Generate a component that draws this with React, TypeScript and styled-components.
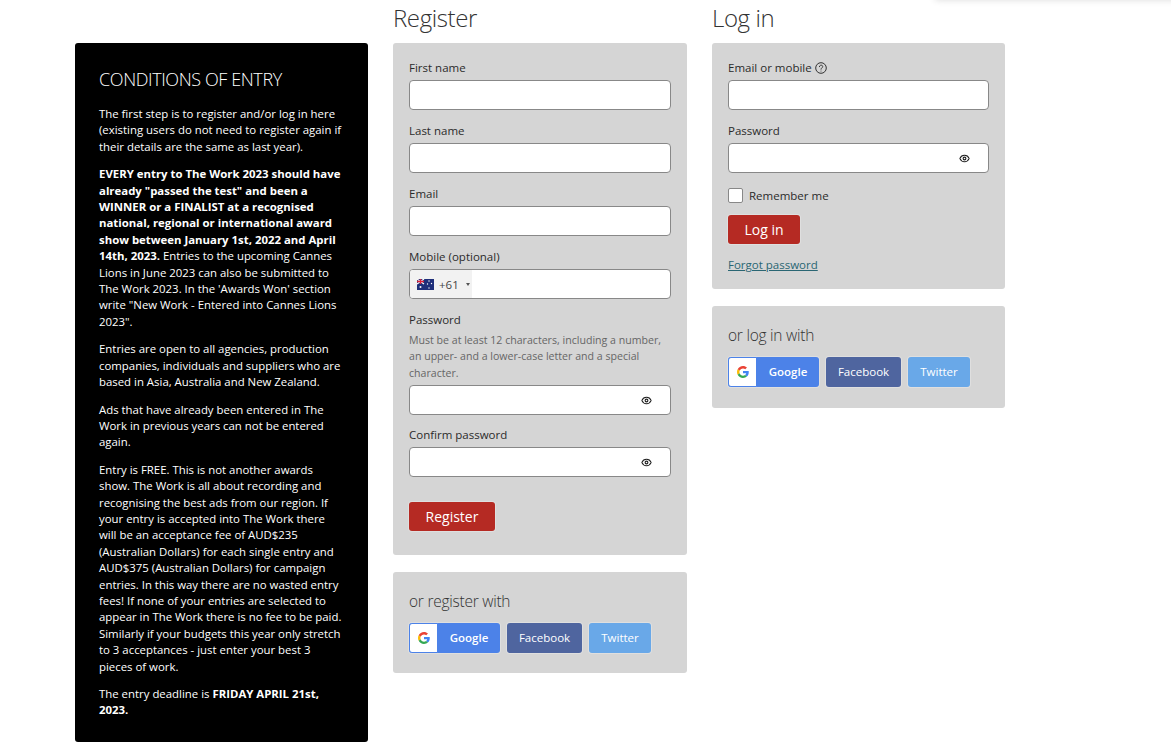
import styled, { createGlobalStyle } from "styled-components";
import { Eye } from "lucide-react";

const Global = createGlobalStyle`
  html, body { margin: 0; padding: 0; background: #fff; }
  body { font-family: "Open Sans", "Liberation Sans", sans-serif; color: #333; }
  * { box-sizing: border-box; }
`;

const Page = styled.div`
  position: relative;
  display: grid;
  grid-template-columns: 293px 294px 293px;
  column-gap: 25px;
  align-items: start;
  width: 1171px;
  height: 756px;
  overflow: hidden;
  padding: 0 0 0 75px;
`;

const TopShadow = styled.div`
  position: absolute;
  top: -8px;
  left: 935px;
  right: -10px;
  height: 8px;
  box-shadow: 0 0 7px rgba(0, 0, 0, 0.14);
`;

const Conditions = styled.aside`
  margin-top: 43px;
  height: 699px;
  background: #000;
  color: #fff;
  border-radius: 3px;
  padding: 24px 24px;
  font-size: 11.4px;
  line-height: 16.4px;

  p { margin: 0 0 11px; }
  b { font-weight: 700; }
`;

const ConditionsTitle = styled.h2`
  margin: 0 0 15px;
  font-size: 18px;
  line-height: 24px;
  font-weight: 300;
  letter-spacing: -0.4px;
`;

const Column = styled.section`
  display: flex;
  flex-direction: column;
`;

const ColumnTitle = styled.h1`
  margin: 0 0 8px;
  height: 35px;
  padding-top: 1px;
  font-size: 24px;
  line-height: 33px;
  font-weight: 300;
  letter-spacing: -0.4px;
  color: #333;
`;

const Card = styled.div<{ $height: number }>`
  height: ${(p) => p.$height}px;
  background: #d5d5d5;
  border-radius: 3px;
  padding: 16px;
  margin-bottom: 16.5px;
`;

const Field = styled.div<{ $gap?: number }>`
  margin-bottom: ${(p) => p.$gap ?? 12}px;
`;

const Label = styled.label`
  display: flex;
  align-items: center;
  gap: 3px;
  height: 18px;
  margin-bottom: 3px;
  font-size: 11.5px;
  line-height: 18px;
  color: #2b2b2b;
`;

const Hint = styled.div`
  margin: 1px 0 4px;
  font-size: 10.6px;
  line-height: 16.3px;
  color: #666;
`;

const InputBox = styled.div`
  position: relative;
  display: flex;
  align-items: center;
  height: 30px;
  background: #fff;
  border: 1px solid #888;
  border-radius: 4px;
  overflow: hidden;
`;

const EyeButton = styled.span`
  position: absolute;
  right: 18px;
  top: 9px;
  display: flex;
  color: #222;
`;

const Dial = styled.div`
  display: flex;
  align-items: center;
  height: 100%;
  width: 62px;
  padding-left: 7px;
  background: #f2f2f2;
  font-size: 11.5px;
  color: #444;
`;

const Caret = styled.span`
  width: 0;
  height: 0;
  margin-left: 7px;
  border-left: 2.5px solid transparent;
  border-right: 2.5px solid transparent;
  border-top: 3px solid #555;
`;

const RedButton = styled.button<{ $width: number; $top?: number }>`
  display: block;
  width: ${(p) => p.$width}px;
  height: 29px;
  margin-top: ${(p) => p.$top ?? 0}px;
  padding: 0;
  border: none;
  border-radius: 3px;
  box-shadow: 0 0 0 1px rgba(255, 255, 255, 0.25);
  background: #b52a23;
  color: #fff;
  font-family: inherit;
  font-size: 14px;
  line-height: 27px;
`;

const RememberRow = styled.div`
  display: flex;
  align-items: center;
  gap: 6px;
  height: 16px;
  margin: 14px 0 12px;
  font-size: 11.5px;
  color: #2b2b2b;
`;

const CheckBox = styled.span`
  width: 15px;
  height: 15px;
  background: #fff;
  border: 1px solid #888;
  border-radius: 2px;
`;

const ForgotLink = styled.a`
  display: block;
  margin-top: 12px;
  font-size: 11.5px;
  line-height: 17px;
  color: #2a6673;
  text-decoration: underline;
`;

const SocialTitle = styled.h3`
  margin: 0 0 11px;
  padding-top: 2px;
  font-size: 15.5px;
  line-height: 22px;
  font-weight: 300;
  letter-spacing: -0.25px;
  color: #333;
`;

const SocialRow = styled.div`
  display: flex;
  gap: 7px;
`;

const SocialButton = styled.div<{ $bg: string; $width: number }>`
  display: flex;
  align-items: center;
  justify-content: center;
  width: ${(p) => p.$width}px;
  height: 30px;
  border-radius: 3px;
  box-shadow: 0 0 0 1px rgba(255, 255, 255, 0.25);
  background: ${(p) => p.$bg};
  color: #fff;
  font-size: 11.5px;
  font-weight: 500;
  overflow: hidden;
`;

const GoogleTile = styled.span`
  display: flex;
  align-items: center;
  justify-content: center;
  width: 29px;
  height: 100%;
  background: #fff;
  border: 1px solid #4c82e8;
  border-radius: 3px 0 0 3px;
`;

const GoogleLabel = styled.span`
  flex: 1;
  text-align: center;
  font-weight: 600;
  font-size: 11.5px;
`;

const GoogleMark = () => (
  <svg width="12" height="12" viewBox="0 0 48 48">
    <path fill="#EA4335" d="M24 9.5c3.5 0 6.700 1.300 9.100 3.400l6.800-6.800C35.800 2.400 30.200 0 24 0 14.600 0 6.500 5.400 2.600 13.200l7.900 6.100C12.400 13.500 17.700 9.500 24 9.500z" />
    <path fill="#4285F4" d="M47 24.500c0-1.600-.1-3.100-.4-4.500H24v9h12.900c-.6 3-2.200 5.500-4.700 7.200l7.600 5.900C44.300 37.900 47 31.800 47 24.500z" />
    <path fill="#FBBC05" d="M10.500 28.700c-.5-1.400-.8-3-.8-4.700s.3-3.300.8-4.700l-7.900-6.100C.9 16.500 0 20.100 0 24s.9 7.500 2.600 10.800l7.900-6.100z" />
    <path fill="#34A853" d="M24 48c6.500 0 11.900-2.100 15.800-5.800l-7.600-5.900c-2.100 1.400-4.900 2.300-8.200 2.300-6.300 0-11.600-4-13.500-9.800l-7.900 6.100C6.500 42.600 14.600 48 24 48z" />
  </svg>
);

const FlagIcon = styled.svg`
  margin-right: 5px;
`;

const AuFlag = () => (
  <FlagIcon width="17" height="11" viewBox="0 0 17 11">
    <rect width="17" height="11" fill="#1f2f7a" />
    <path d="M0 0l7 5M7 0L0 5" stroke="#fff" strokeWidth="1.200" />
    <path d="M3.500 0v5M0 2.500h7" stroke="#d8213a" strokeWidth="1.400" />
    <circle cx="3.500" cy="8" r="1" fill="#fff" />
    <circle cx="12" cy="2" r=".7" fill="#fff" />
    <circle cx="14.500" cy="4.500" r=".7" fill="#fff" />
    <circle cx="10.500" cy="5" r=".7" fill="#fff" />
    <circle cx="12" cy="9" r=".7" fill="#fff" />
  </FlagIcon>
);

const HelpIcon = () => (
  <svg width="12" height="12" viewBox="0 0 12 12" fill="none" stroke="#333" strokeWidth="1">
    <circle cx="6" cy="6" r="5.300" />
    <path d="M4.400 4.700c0-2.100 3.300-2.100 3.300-.1 0 1.200-1.700 1.300-1.700 2.600" strokeLinecap="round" />
    <circle cx="6" cy="8.900" r=".5" fill="#333" stroke="none" />
  </svg>
);

const PasswordBox = () => (
  <InputBox>
    <EyeButton>
      <Eye size={11} strokeWidth={2.4} />
    </EyeButton>
  </InputBox>
);

const Socials = () => (
  <SocialRow>
    <SocialButton $bg="#4c82e8" $width={91}>
      <GoogleTile>
        <GoogleMark />
      </GoogleTile>
      <GoogleLabel>Google</GoogleLabel>
    </SocialButton>
    <SocialButton $bg="#4f659f" $width={75}>Facebook</SocialButton>
    <SocialButton $bg="#69a8e8" $width={62}>Twitter</SocialButton>
  </SocialRow>
);

export default function App() {
  return (
    <>
      <Global />
      <Page>
        <TopShadow />
        <Conditions>
          <ConditionsTitle>CONDITIONS OF ENTRY</ConditionsTitle>
          <p>
            The first step is to register and/or log in here (existing users do not need to register
            again if their details are the same as last year).
          </p>
          <p>
            <b>
              EVERY entry to The Work 2023 should have already "passed the test" and been a WINNER or
              a FINALIST at a recognised national, regional or international award show between
              January 1st, 2022 and April 14th, 2023.
            </b>{" "}
            Entries to the upcoming Cannes Lions in June 2023 can also be submitted to The Work 2023.
            In the 'Awards Won' section write "New Work - Entered into Cannes Lions 2023".
          </p>
          <p>
            Entries are open to all agencies, production companies, individuals and suppliers who are
            based in Asia, Australia and New Zealand.
          </p>
          <p>Ads that have already been entered in The Work in previous years can not be entered again.</p>
          <p>
            Entry is FREE. This is not another awards show. The Work is all about recording and
            recognising the best ads from our region. If your entry is accepted into The Work there
            will be an acceptance fee of AUD$235 (Australian Dollars) for each single entry and
            AUD$375 (Australian Dollars) for campaign entries. In this way there are no wasted entry
            fees! If none of your entries are selected to appear in The Work there is no fee to be
            paid. Similarly if your budgets this year only stretch to 3 acceptances - just enter your
            best 3 pieces of work.
          </p>
          <p>
            The entry deadline is <b>FRIDAY APRIL 21st, 2023.</b>
          </p>
        </Conditions>

        <Column>
          <ColumnTitle>Register</ColumnTitle>
          <Card $height={512}>
            <Field>
              <Label>First name</Label>
              <InputBox />
            </Field>
            <Field>
              <Label>Last name</Label>
              <InputBox />
            </Field>
            <Field>
              <Label>Email</Label>
              <InputBox />
            </Field>
            <Field>
              <Label>Mobile (optional)</Label>
              <InputBox>
                <Dial>
                  <AuFlag />
                  +61
                  <Caret />
                </Dial>
              </InputBox>
            </Field>
            <Field $gap={11}>
              <Label>Password</Label>
              <Hint>
                Must be at least 12 characters, including a number, an upper- and a lower-case letter
                and a special character.
              </Hint>
              <PasswordBox />
            </Field>
            <Field>
              <Label>Confirm password</Label>
              <PasswordBox />
            </Field>
            <RedButton $width={86} $top={25}>Register</RedButton>
          </Card>
          <Card $height={101}>
            <SocialTitle>or register with</SocialTitle>
            <Socials />
          </Card>
        </Column>

        <Column>
          <ColumnTitle>Log in</ColumnTitle>
          <Card $height={246}>
            <Field>
              <Label>
                Email or mobile <HelpIcon />
              </Label>
              <InputBox />
            </Field>
            <Field>
              <Label>Password</Label>
              <PasswordBox />
            </Field>
            <RememberRow>
              <CheckBox />
              Remember me
            </RememberRow>
            <RedButton $width={72}>Log in</RedButton>
            <ForgotLink>Forgot password</ForgotLink>
          </Card>
          <Card $height={102}>
            <SocialTitle>or log in with</SocialTitle>
            <Socials />
          </Card>
        </Column>
      </Page>
    </>
  );
}
